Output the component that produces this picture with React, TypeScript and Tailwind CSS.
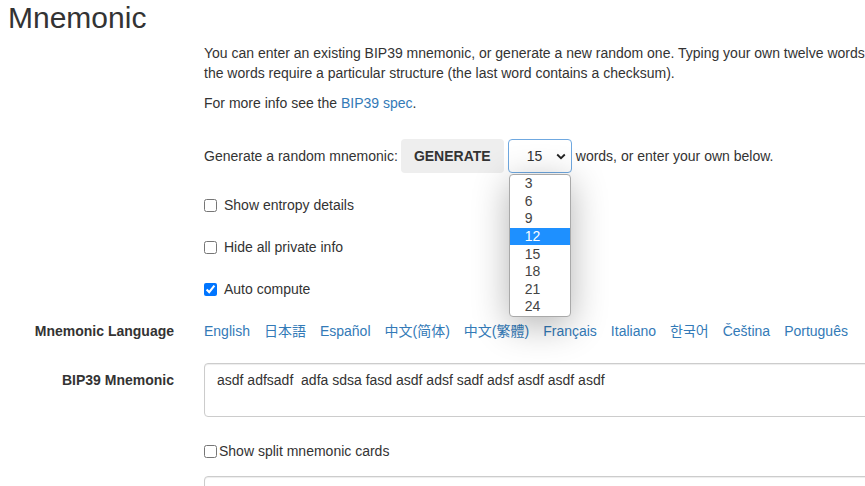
import React from "react";

const langs: { t: string; f?: string }[] = [
  { t: "English" },
  { t: "日本語", f: "'Liberation Sans','Noto Sans CJK JP',sans-serif" },
  { t: "Español" },
  { t: "中文(简体)", f: "'Liberation Sans','Noto Sans CJK SC',sans-serif" },
  { t: "中文(繁體)", f: "'Liberation Sans','Noto Sans CJK TC',sans-serif" },
  { t: "Français" },
  { t: "Italiano" },
  { t: "한국어", f: "'Liberation Sans','Noto Sans CJK KR',sans-serif" },
  { t: "Čeština" },
  { t: "Português" },
];

const options = ["3", "6", "9", "12", "15", "18", "21", "24"];

function Check({ label, checked }: { label: string; checked?: boolean }) {
  return (
    <div className="flex h-[20px] items-center">
      <input
        type="checkbox"
        defaultChecked={checked}
        className="m-0 h-[13px] w-[13px] accent-[#0075ff]"
      />
      <span className="ml-[7px]">{label}</span>
    </div>
  );
}

export default function App() {
  return (
    <div
      className="relative h-[486px] w-[865px] overflow-hidden bg-white text-[14px] leading-[20px] text-[#333]"
      style={{ fontFamily: "'Liberation Sans', Arial, sans-serif" }}
    >
      <div className="w-[1300px]">
        <h2 className="h-[34px] pl-[8px] pt-[1px] text-[30px] leading-[33px] font-normal">Mnemonic</h2>
        <div className="ml-[204px]">
          <p className="mt-[9px] w-[1000px]">
            You can enter an existing BIP39 mnemonic, or generate a new random one. Typing your own twelve words will probably not work how you expect, since
            <br />
            the words require a particular structure (the last word contains a checksum).
          </p>
          <p className="mt-[10px]">
            For more info see the <span className="text-[#337ab7]">BIP39 spec</span>.
          </p>
          <div className="mt-[26px] flex h-[34px] items-center">
            <span>Generate a random mnemonic:</span>
            <div className="ml-[3px] flex h-[34px] w-[103px] items-center justify-center rounded-[4px] bg-[#eeeeee] font-bold">
              GENERATE
            </div>
            <div className="relative ml-[4px] h-[34px] w-[64px]">
              <div className="flex h-full w-full items-center rounded-[4px] border border-[#6fa8e0] pl-[18px]">
                15
              </div>
              <svg
                className="absolute right-[6px] top-[14px]"
                width="10"
                height="7"
                viewBox="0 0 10 7"
              >
                <path d="M1.2 1.5 L5 5.2 L8.8 1.5" fill="none" stroke="#222" strokeWidth="1.8" />
              </svg>
              <div className="absolute left-[1px] top-[35px] z-10 w-[62px] overflow-hidden rounded-[4px] border border-[#a9a9a9] bg-white shadow-[0_8px_36px_rgba(0,0,0,0.3)]">
                {options.map((o) => (
                  <div
                    key={o}
                    className={
                      "flex h-[17.6px] items-center pl-[15px] leading-[17px] " +
                      (o === "12" ? "bg-[#1e90ff] text-white" : "text-[#444]")
                    }
                  >
                    {o}
                  </div>
                ))}
              </div>
            </div>
            <span className="ml-[4px]">words, or enter your own below.</span>
          </div>
          <div className="mt-[22px] flex flex-col gap-[22px]">
            <Check label="Show entropy details" />
            <Check label="Hide all private info" />
            <Check label="Auto compute" checked />
          </div>
        </div>
        <div className="mt-[22px] flex">
          <div className="w-[174px] shrink-0 text-right font-bold">Mnemonic Language</div>
          <div className="ml-[30px] flex gap-[14px] text-[#337ab7]">
            {langs.map((l) => (
              <span key={l.t} style={l.f ? { fontFamily: l.f } : undefined}>
                {l.t}
              </span>
            ))}
          </div>
        </div>
        <div className="mt-[22px] flex">
          <div className="w-[174px] shrink-0 pt-[7px] text-right font-bold">BIP39 Mnemonic</div>
          <div className="ml-[30px] h-[54px] w-[900px] whitespace-pre rounded-[4px] border border-[#cccccc] px-[12px] py-[6px] shadow-[inset_0_1px_1px_rgba(0,0,0,0.075)]">
            {"asdf adfsadf  adfa sdsa fasd asdf adsf sadf adsf asdf asdf asdf"}
          </div>
        </div>
        <div className="ml-[204px] mt-[24px] flex h-[20px] items-center">
          <input type="checkbox" className="m-0 h-[13px] w-[13px]" />
          <span className="ml-[2px]">Show split mnemonic cards</span>
        </div>
        <div className="ml-[204px] mt-[15px] h-[60px] w-[900px] rounded-[4px] border border-[#cccccc] shadow-[inset_0_1px_1px_rgba(0,0,0,0.075)]" />
      </div>
    </div>
  );
}
